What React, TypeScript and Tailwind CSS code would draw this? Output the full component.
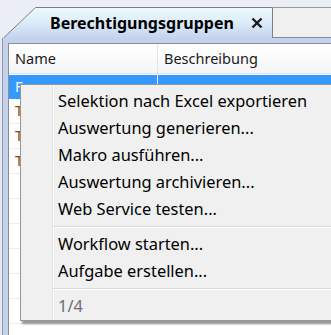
import React from "react";

const items1 = [
  "Selektion nach Excel exportieren",
  "Auswertung generieren...",
  "Makro ausführen...",
  "Auswertung archivieren...",
  "Web Service testen...",
];
const items2 = ["Workflow starten...", "Aufgabe erstellen..."];

function Sep() {
  return (
    <div className="h-[8px] flex flex-col justify-center pl-[32px]">
      <div className="h-px bg-[#d7d7d7]" />
      <div className="h-px bg-white" />
    </div>
  );
}

function Item({ label, gray }: { label: string; gray?: boolean }) {
  return (
    <div className={`h-[27px] flex items-center pl-[37px] ${gray ? "text-[#6d6d6d]" : "text-black"}`}>
      {label}
    </div>
  );
}

export default function App() {
  const font = { fontFamily: '"Noto Sans", "Open Sans", sans-serif' };
  return (
    <div className="w-[331px] h-[335px] bg-[#eceef6] relative overflow-hidden" style={font}>
      <div className="h-[7px]" />
      {/* tab row */}
      <div className="h-[31px] flex">
        <div className="w-[3px]" />
        <div className="relative w-[270px] h-[31px]">
          <div
            className="absolute inset-0 bg-gradient-to-b from-[#edf9fd] via-[#dcecf8] to-[#c3d3ef]"
            style={{ clipPath: "polygon(0 100%, 32px 0, 100% 0, 100% 100%)" }}
          />
          <svg className="absolute inset-0" width="270" height="31">
            <path d="M0.5 31 L32.5 0.5 L269.5 0.5 L269.5 31" fill="none" stroke="#7b7f88" strokeWidth="1" />
          </svg>
          <div className="absolute left-[47px] top-[4px] flex items-center gap-[17px]">
            <span className="text-[16px] font-bold text-black">Berechtigungsgruppen</span>
            <svg width="12" height="12" viewBox="0 0 12 12">
              <path d="M1.5 1.5 L10.5 10.5 M10.5 1.5 L1.5 10.5" stroke="#1a1a1a" strokeWidth="2.4" />
            </svg>
          </div>
        </div>
        <div className="flex-1 h-[31px] bg-[#f0f0f0] border-t border-[#9a9a9a] border-b border-b-[#8a8a8a]" />
      </div>
      {/* panel */}
      <div className="flex h-[297px]">
        <div className="w-[2px] bg-[#e6e8f0]" />
        <div className="w-px bg-[#8e97ad]" />
        <div className="flex-1 bg-[#c5d2ee] pl-[5px] pt-[5px]">
          <div className="h-full bg-white border-l border-t border-[#8a8d94] text-[14.5px]">
            {/* header */}
            <div className="h-[30px] flex bg-gradient-to-b from-white to-[#f4f5f7] border-b border-[#e3e4e6]">
              <div className="w-[149px] border-r border-[#e3e4e6] flex items-center pl-[6px] text-[#1a1a1a]">Name</div>
              <div className="flex-1 flex items-center pl-[6px] text-[#1a1a1a]">Beschreibung</div>
            </div>
            <div className="h-px" />
            <div className="h-[24px] flex bg-[#3399ff] text-white">
              <div className="w-[149px] border-r border-white flex items-center pl-[6px]">F</div>
              <div className="flex-1" />
            </div>
            {[0, 1, 2, 3, 4, 5, 6, 7, 8].map((i) => (
              <div key={i} className="h-[25px] flex border-b border-[#ececec]">
                <div className="w-[149px] border-r border-[#ececec] flex items-center pl-[6px] text-[#8b4a00]">
                  {i < 3 ? "T" : ""}
                </div>
                <div className="flex-1" />
              </div>
            ))}
          </div>
        </div>
      </div>
      {/* context menu */}
      <div className="absolute left-[20px] top-[84px] w-[330px] h-[237px] bg-[#f0f0f0] border border-[#979797] shadow-[2px_3px_2px_rgba(0,0,0,0.4)] text-[16.4px]">
        <div className="absolute left-[31px] top-0 bottom-0 w-px bg-[#e2e3e3]" />
        <div className="absolute left-[32px] top-0 bottom-0 w-px bg-white" />
        <div className="relative pt-[3px]">
          {items1.map((t) => (
            <Item key={t} label={t} />
          ))}
          <Sep />
          {items2.map((t) => (
            <Item key={t} label={t} />
          ))}
          <Sep />
          <Item label="1/4" gray />
        </div>
      </div>
    </div>
  );
}
